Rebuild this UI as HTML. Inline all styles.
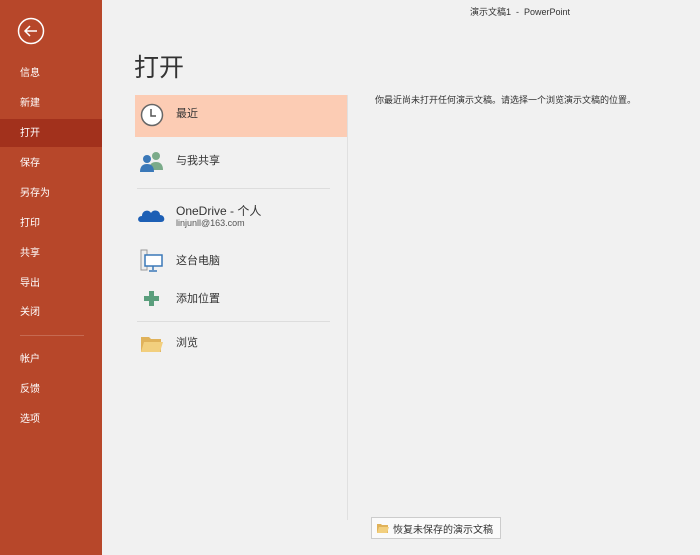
<!DOCTYPE html>
<html><head><meta charset="utf-8"><style>
*{margin:0;padding:0;box-sizing:border-box}
body{width:700px;height:555px;background:#f1f1f1;font-family:"Liberation Sans","Noto Sans CJK SC",sans-serif;position:relative;overflow:hidden;color:#333}
#side{position:absolute;left:0;top:0;width:102px;height:555px;background:#b7472a}
.it{position:absolute;left:20px;color:#fff;font-size:10px}
.sel{position:absolute;left:0;top:119px;width:102px;height:28px;background:#a2311c}
.a{position:absolute}
.t{position:absolute;font-size:11px;color:#333}
</style></head><body>
<div id="side">
<svg class="a" style="left:17px;top:17px" width="28" height="28"><circle cx="14" cy="14" r="12.5" fill="none" stroke="#fff" stroke-width="1.5"/><path d="M20 14H8M13 9l-5 5 5 5" fill="none" stroke="#fff" stroke-width="1.5"/></svg>
<div class="sel"></div>
<div class="it" style="top:64px">信息</div>
<div class="it" style="top:94px">新建</div>
<div class="it" style="top:124px">打开</div>
<div class="it" style="top:154px">保存</div>
<div class="it" style="top:184px">另存为</div>
<div class="it" style="top:214px">打印</div>
<div class="it" style="top:244px">共享</div>
<div class="it" style="top:274px">导出</div>
<div class="it" style="top:303px">关闭</div>
<div class="a" style="left:20px;top:335px;width:64px;height:1px;background:#c66a52"></div>
<div class="it" style="top:350px">帐户</div>
<div class="it" style="top:380px">反馈</div>
<div class="it" style="top:410px">选项</div>
</div>
<div class="t" style="left:470px;top:5px;font-size:9px">演示文稿1 &nbsp;-&nbsp; PowerPoint</div>
<div class="t" style="left:134px;top:48px;font-size:25px;color:#333">打开</div>
<div class="a" style="left:135px;top:95px;width:213px;height:42px;background:#fcccb4"></div>
<svg class="a" style="left:140px;top:103px" width="24" height="24"><circle cx="12" cy="12" r="10.5" fill="#fff" stroke="#666" stroke-width="1.5"/><path d="M11 6v7h5" fill="none" stroke="#555" stroke-width="1.5"/></svg>
<div class="t" style="left:176px;top:105px">最近</div>
<svg class="a" style="left:139px;top:150px" width="26" height="22"><circle cx="17" cy="6" r="4" fill="#7bab8a"/><path d="M10 20c0-6 3-8 7-8s7 2 7 8z" fill="#7bab8a"/><circle cx="8" cy="9" r="4" fill="#3a78b8"/><path d="M1 22c0-6 3-8 7-8s7 2 7 8z" fill="#3a78b8"/></svg>
<div class="t" style="left:176px;top:152px">与我共享</div>
<div class="a" style="left:137px;top:188px;width:193px;height:1px;background:#ddd"></div>
<svg class="a" style="left:138px;top:205px" width="28" height="18"><path d="M3 17c-4 0-4-6 1-6 0-6 7-7 9-3 2-4 9-3 9 2 5 0 6 7 1 7z" fill="#1d5fb5"/></svg>
<div class="t" style="left:176px;top:202px;font-size:12px">OneDrive - 个人</div>
<div class="t" style="left:176px;top:218px;font-size:9px;color:#555">linjunll@163.com</div>
<svg class="a" style="left:140px;top:249px" width="24" height="24"><rect x="1" y="1" width="6" height="20" fill="#eee" stroke="#999"/><rect x="5" y="6" width="17" height="11" fill="#fff" stroke="#3a78b8" stroke-width="1.5"/><path d="M13 17v4M9 22h8" stroke="#3a78b8" stroke-width="1.5"/></svg>
<div class="t" style="left:176px;top:252px">这台电脑</div>
<svg class="a" style="left:144px;top:291px" width="15" height="15"><path d="M5 0h5v5h5v5h-5v5H5v-5H0V5h5z" fill="#5a9e7c"/></svg>
<div class="t" style="left:176px;top:290px">添加位置</div>
<div class="a" style="left:137px;top:321px;width:193px;height:1px;background:#ddd"></div>
<svg class="a" style="left:140px;top:335px" width="24" height="18"><path d="M1 2h8l2 2h10v13H1z" fill="#e0b25a"/><path d="M4 7h19l-3 10H1z" fill="#f2cf7e"/></svg>
<div class="t" style="left:176px;top:334px">浏览</div>
<div class="a" style="left:347px;top:95px;width:1px;height:425px;background:#e0e0e0"></div>
<div class="t" style="left:375px;top:93px;font-size:9px">你最近尚未打开任何演示文稿。请选择一个浏览演示文稿的位置。</div>
<div class="a" style="left:371px;top:517px;width:130px;height:22px;border:1px solid #ccc;background:#fafafa"></div>
<svg class="a" style="left:377px;top:523px" width="12" height="10"><path d="M0 1h4l1 1h6v8H0z" fill="#e0b25a"/><path d="M2 4h10l-2 6H0z" fill="#f2cf7e"/></svg>
<div class="t" style="left:393px;top:521px;font-size:10px">恢复未保存的演示文稿</div>
</body></html>
